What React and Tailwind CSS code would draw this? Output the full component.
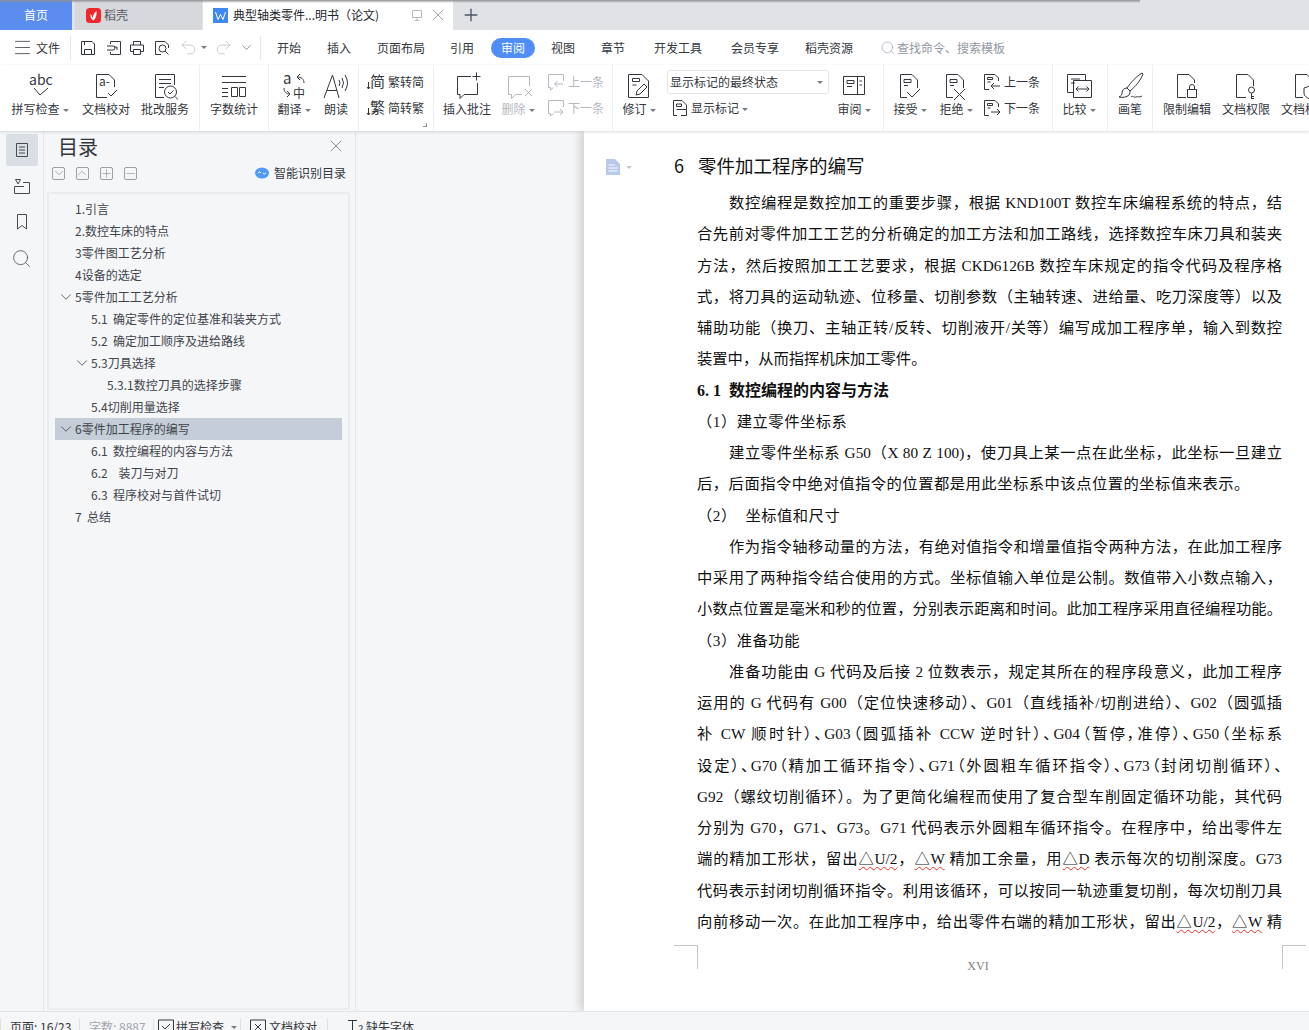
import React from 'react';
import { ChevronDown, X, Plus, Search, Menu, Undo2, Redo2, Minus } from 'lucide-react';

const Ico = ({ w = 30, h = 30, className = '', children }) => (
  <svg width={w} height={h} viewBox={`0 0 ${w} ${h}`} fill="none" stroke="currentColor" strokeWidth="1" className={`shrink-0 overflow-visible ${className}`}>
    {children}
  </svg>
);

const GlyphText = ({ x, y, size, children }) => (
  <text x={x} y={y} fontSize={size} fill="currentColor" stroke="none" fontFamily="Noto Sans CJK SC, sans-serif">{children}</text>
);

const Caret = ({ className = '' }) => (
  <span className={`ml-[3px] inline-block h-0 w-0 border-x-[3px] border-t-[3px] border-x-transparent border-t-[#777c85] align-middle ${className}`} />
);

const Sep = () => <div className="h-full w-px shrink-0 bg-[#eceef0]" />;

// ribbon button: icon on top, label below
const Big = ({ width, icon, label, caret, grey }) => (
  <div className={`flex shrink-0 flex-col items-center ${width} ${grey ? 'text-[#b4b8be]' : 'text-[#33373d]'}`}>
    <div className="mt-[6px] flex h-[30px] items-center justify-center">{icon}</div>
    <div className="-mt-[1px] whitespace-nowrap text-xs leading-[18px]">{label}{caret && <Caret />}</div>
  </div>
);

const Small = ({ icon, label, caret, grey }) => (
  <div className={`flex h-[18px] items-center gap-[3px] whitespace-nowrap text-xs ${grey ? 'text-[#b4b8be]' : 'text-[#33373d]'}`}>
    {icon}<span>{label}{caret && <Caret />}</span>
  </div>
);

const DocTag = ({ children }) => (
  <Ico className="-ml-[6px]">
    <path d="M8.5 3.5H20L25.5 9V17M8.5 3.5V26.5H15" />
    <path d="M12 8.5h7v3h-7zM12 14.5h4" />
    {children}
  </Ico>
);

const SmallDoc = ({ dir }) => (
  <Ico w={18} h={18}>
    <path d="M1.5 1.5H12L15.5 5V8M1.5 1.5V16.5H6" />
    <path d="M4.5 4.5h5v2h-5zM4.5 9h3" />
    {dir === 'up' ? <path d="M17 13H8M11 10l-3 3 3 3" /> : <path d="M8 13h9M14 10l3 3-3 3" />}
  </Ico>
);

const SmallBubble = ({ dir }) => (
  <Ico w={18} h={18}>
    <path d="M1.5 1.5H16.5V8M1.5 1.5V14.5H3.5V17L6.5 14.5" />
    {dir === 'up' ? <path d="M16 11H7.5M10.5 8l-3 3 3 3" /> : <path d="M7 13h9M13 10l3 3-3 3" />}
  </Ico>
);

const SquareBtn = ({ children, className = '' }) => (
  <div className={`flex h-[13px] w-[13px] shrink-0 items-center justify-center overflow-hidden rounded-[2px] border border-[#9a9ea5] ${className}`}>
    {children}
  </div>
);

const MENU = [
  ['开始', 'w-[56px]'],
  ['插入', 'w-[44px]'],
  ['页面布局', 'w-[80px]'],
  ['引用', 'w-[42px]'],
  ['审阅', 'ml-[8px] w-[44px] rounded-full bg-[#4f8ef7] text-white'],
  ['视图', 'w-[56px]'],
  ['章节', 'w-[44px]'],
  ['开发工具', 'w-[86px]'],
  ['会员专享', 'w-[68px]'],
  ['稻壳资源', 'w-[80px]'],
];

const TOC = [
  { t: '1.引言', cls: 'pl-[20px]' },
  { t: '2.数控车床的特点', cls: 'pl-[20px]' },
  { t: '3零件图工艺分析', cls: 'pl-[20px]' },
  { t: '4设备的选定', cls: 'pl-[20px]' },
  { t: '5零件加工工艺分析', cls: 'pl-[2px]', open: true },
  { t: '5.1  确定零件的定位基准和装夹方式', cls: 'pl-[36px]' },
  { t: '5.2  确定加工顺序及进给路线', cls: 'pl-[36px]' },
  { t: '5.3刀具选择', cls: 'pl-[18px]', open: true },
  { t: '5.3.1数控刀具的选择步骤', cls: 'pl-[52px]' },
  { t: '5.4切削用量选择', cls: 'pl-[36px]' },
  { t: '6零件加工程序的编写', cls: 'pl-[2px] bg-[#c5ced8]', open: true },
  { t: '6.1  数控编程的内容与方法', cls: 'pl-[36px]' },
  { t: '6.2    装刀与对刀', cls: 'pl-[36px]' },
  { t: '6.3  程序校对与首件试切', cls: 'pl-[36px]' },
  { t: '7  总结', cls: 'pl-[20px]' },
];

const Wavy = ({ children }) => (
  <span className="underline decoration-[#e5342c] decoration-wavy decoration-1 underline-offset-2">{children}</span>
);

const Line = ({ children, indent, last, tight, wide }) => (
  <div className={`whitespace-pre ${indent ? 'pl-[32px]' : ''} ${last ? '' : 'text-justify [text-align-last:justify]'} ${tight ? "[font-feature-settings:'palt']" : ''} ${wide ? 'tracking-[0.5px]' : ''}`}>
    {children}
  </div>
);

export default function App() {
  return (
    <div lang="zh-CN" className="relative flex h-[1030px] w-full flex-col overflow-hidden bg-[#f5f6f8] text-[#33373d] [font-family:'Noto_Sans_CJK_SC',sans-serif]">
      {/* window shadow over the tabs */}
      <div className="pointer-events-none absolute left-0 top-0 h-[3px] w-[1140px] bg-gradient-to-b from-[#8f9094] to-transparent" />

      {/* Tab bar */}
      <div className="flex h-[30px] shrink-0 items-center bg-[#e0e2e6] text-xs">
        <div className="flex h-full w-[72px] items-center justify-center bg-[#5b8def] text-white">首页</div>
        <div className="ml-[3px] flex h-full w-[127px] items-center bg-[#d7d8dc] pl-[11px] text-[#55595f]">
          <svg width="15" height="15" viewBox="0 0 15 15">
            <rect width="15" height="15" rx="3.5" fill="#f0282d" />
            <path d="M7.5 12.5C5 11 4 9 4.5 6c1 1 1.5 2.5 2 4 .5-2.5 1.500-5 4-7 .5 3-.5 7-3 9.500z" fill="#fff" />
          </svg>
          <span className="ml-[3px]">稻壳</span>
        </div>
        <div className="ml-px flex h-full w-[250px] items-center bg-white pl-[10px] text-[#22262b]">
          <svg width="15" height="15" viewBox="0 0 15 15" className="shrink-0">
            <rect width="15" height="15" fill="#3f87f5" />
            <path d="M2.500 4l2.500 7.500 2.500-5 2.500 5L12.500 4" fill="none" stroke="#fff" strokeWidth="1" />
          </svg>
          <span className="ml-[5px] w-[178px] shrink-0 whitespace-nowrap">典型轴类零件...明书（论文)</span>
          <Ico w={12} h={12} className="text-[#b4b8be]">
            <path d="M1.500 1.500h9v7h-9zM6 8.500v2.500M3.500 11.500h5" />
          </Ico>
          <X size={20} strokeWidth={0.9} className="ml-[5px] shrink-0 text-[#80848b]" />
        </div>
        <Plus size={20} strokeWidth={1.6} className="ml-[8px] text-[#4b5563]" />
      </div>

      {/* Menu row */}
      <div className="flex h-[35px] shrink-0 items-center bg-white text-xs">
        <Menu size={21} strokeWidth={0.9} className="ml-[12px] shrink-0" />
        <span className="ml-[3px] w-[34px]">文件</span>
        <div className="h-[24px] w-px bg-[#e4e6e9]" />
        <div className="flex w-[189px] items-center pl-[9px]">
          <Ico w={16} h={16}><path d="M1.500 1.500H12L14.500 4V14.500H1.500zM4.500 14.500V9.500H11.500V14.500M4.500 1.500V5" /></Ico>
          <Ico w={16} h={16} className="ml-[10px]"><path d="M4.500 4V1.500H14.500V14.500H4.500V12M1 6h6a2 2 0 0 1 0 4H1M8 7h3v3" /></Ico>
          <Ico w={16} h={16} className="ml-[7px]"><path d="M4.500 5V1.500H11.500V5M4.500 11.500H1.500V5H14.500V11.500H11.500M4.500 9.500H11.500V14.500H4.500z" /></Ico>
          <Ico w={16} h={16} className="ml-[9px]"><path d="M1.500 14.500V1.500H11L14.500 5V8M1.500 14.500H7" /><circle cx="8.500" cy="8.500" r="3.500" /><path d="M11 11l3.500 3.500" /></Ico>
          <Undo2 size={19} strokeWidth={0.9} className="ml-[9px] shrink-0 text-[#b4b8be]" />
          <Caret className="ml-[3px]" />
          <Redo2 size={19} strokeWidth={0.9} className="ml-[7px] shrink-0 text-[#b4b8be]" />
          <ChevronDown size={15} strokeWidth={1} className="ml-[6px] shrink-0 text-[#555]" />
        </div>
        <div className="h-[24px] w-px bg-[#e4e6e9]" />
        {MENU.map(([name, cls]) => (
          <div key={name} className={`flex h-[20px] shrink-0 items-center justify-center ${cls}`}>{name}</div>
        ))}
        <Search size={16} strokeWidth={1} className="ml-[11px] shrink-0 text-[#9aa3b2]" />
        <span className="ml-[1px] text-[#9298a3]">查找命令、搜索模板</span>
      </div>

      {/* Ribbon */}
      <div className="z-10 flex h-[66px] shrink-0 overflow-hidden bg-white pl-[5px] shadow-[0_1px_3px_rgba(0,0,0,0.14)]">
        <Big width="w-[70px]" caret label="拼写检查" icon={
          <Ico>
            <GlyphText x={4} y={14} size={14}>abc</GlyphText>
            <path d="M9 17l6 7 8-7" />
          </Ico>
        } />
        <div className="w-px shrink-0" />
        <Big width="w-[60px]" label="文档校对" icon={
          <Ico>
            <GlyphText x={8} y={15} size={12}>a-</GlyphText>
            <path d="M5.500 3.500H18L23.500 9V16M5.500 3.500V26.500H16M17 22l3 3 6-6" />
          </Ico>
        } />
        <Big width="w-[58px]" label="批改服务" icon={
          <Ico>
            <path d="M5.500 3.500H24.500V14M5.500 3.500V26.500H14M9 8.500H21M9 12.500H21M9 16.500H14" />
            <circle cx="20.500" cy="21" r="6" />
            <path d="M25 25.500l3 3M18 21l2 2 3.500-3.500" />
          </Ico>
        } />
        <div className="w-[5px] shrink-0" />
        <Sep />
        <Big width="w-[68px]" label="字数统计" icon={
          <Ico>
            <path d="M3 5.500H27M3 11.500H27M3 17.500H9M3 21.500H9M3 25.500H9" />
            <path d="M12.500 16.500h6v9h-6zM20.500 16.500h6v9h-6z" />
          </Ico>
        } />
        <Sep />
        <Big width="w-[50px]" caret label="翻译" icon={
          <Ico>
            <GlyphText x={4} y={13} size={15}>a</GlyphText>
            <GlyphText x={14} y={27} size={12}>中</GlyphText>
            <path d="M25 12c0-4-3-6-7-6l3-3M18 6l3 3M5 17c0 4 2 6 6 6l-3-3M11 23l-3 3" />
          </Ico>
        } />
        <Big width="w-[34px]" label="朗读" icon={
          <Ico>
            <path d="M3 27L11.500 4 18 27M6 19.500H16" />
            <path d="M18 9q2 3 0 6M21 7q3 5 0 10M24 4q5 8 0 16" />
          </Ico>
        } />
        <div className="w-[5px] shrink-0" />
        <Sep />
        <div className="relative flex w-[74px] shrink-0 flex-col gap-[8px] pl-[8px] pt-[8px]">
          <Small label="繁转简" icon={
            <Ico w={18} h={18}><GlyphText x={3} y={14} size={15}>简</GlyphText><path d="M1.500 9v7M0 14l1.500 2L3 14" /></Ico>
          } />
          <Small label="简转繁" icon={
            <Ico w={18} h={18}><GlyphText x={3} y={14} size={15}>繁</GlyphText><path d="M1.500 9v7M0 14l1.500 2L3 14" /></Ico>
          } />
          <div className="absolute bottom-[4px] right-[6px] h-[4px] w-[4px] border-b border-r border-[#8b8f96]" />
        </div>
        <Sep />
        <Big width="w-[66px]" label="插入批注" icon={
          <Ico>
            <path d="M5.500 5.500H19M25.500 12V23.500H12L8 27.500V23.500H5.500V5.500" />
            <path d="M24.500 1.500V9.500M20.500 5.500H28.500" />
          </Ico>
        } />
        <Big width="w-[36px]" grey caret label="删除" icon={
          <Ico>
            <path d="M5.500 5.500H26.500V15M5.500 5.500V23.500H8.500V27.500L12.500 23.500H19" />
            <path d="M22 18l7 7M29 18l-7 7" />
          </Ico>
        } />
        <div className="flex w-[76px] shrink-0 flex-col gap-[8px] pl-[11px] pt-[8px]">
          <Small grey label="上一条" icon={<SmallBubble dir="up" />} />
          <Small grey label="下一条" icon={<SmallBubble dir="down" />} />
        </div>
        <Sep />
        <Big width="w-[52px]" caret label="修订" icon={
          <Ico>
            <path d="M4.500 3.500H18L24.500 10V26.500H4.500z" />
            <path d="M8.500 7.500h7v3h-7zM8.500 14h4M12 24l1-4 7-7 3 3-7 7z" />
          </Ico>
        } />
        <div className="flex w-[167px] shrink-0 flex-col pl-[2px] pt-[5px]">
          <div className="flex h-[24px] w-[162px] items-center justify-between rounded-[3px] border border-[#e3e5e8] pl-[2px] pr-[5px] text-xs">
            <span>显示标记的最终状态</span><Caret />
          </div>
          <div className="mt-[5px] pl-[5px]">
            <Small caret label="显示标记" icon={
              <Ico w={16} h={18}>
                <path d="M1.500 1.500H10L14.500 6V10M1.500 1.500V16.500H5M4.500 5h5v2.500h-5zM4.500 10.500h3.500M7.500 10.500H14.500V16.500H9" />
              </Ico>
            } />
          </div>
        </div>
        <Big width="w-[44px]" caret label="审阅" icon={
          <Ico>
            <path d="M4.500 5.500H25.500V23.500H4.500zM18.500 5.500V23.500M8 9.500h7v3H8zM8 15.500h5M20.500 10H23M20.500 14H23" />
          </Ico>
        } />
        <div className="w-[7px] shrink-0" />
        <Sep />
        <Big width="w-[52px]" caret label="接受" icon={<DocTag><path d="M15 21l5 5 8-8" /></DocTag>} />
        <Big width="w-[40px]" caret label="拒绝" icon={<DocTag><path d="M16 18l11 11M27 18L16 29" /></DocTag>} />
        <div className="flex w-[76px] shrink-0 flex-col gap-[8px] pl-[7px] pt-[8px]">
          <Small label="上一条" icon={<SmallDoc dir="up" />} />
          <Small label="下一条" icon={<SmallDoc dir="down" />} />
        </div>
        <Sep />
        <Big width="w-[52px]" caret label="比较" icon={
          <Ico>
            <path d="M3.500 3.500H21.500V9M3.500 3.500V21.500H9M9.500 9.500H27.500V26.500H9.500zM7 8h9M7 12h4" />
            <path d="M12 18h13M14.500 15.500L12 18l2.500 2.500M22.500 15.500L25 18l-2.500 2.500" />
          </Ico>
        } />
        <div className="w-[2px] shrink-0" />
        <Sep />
        <Big width="w-[44px]" label="画笔" icon={
          <Ico>
            <path d="M27 2c-5 3-11 9-15 15l3 3c5-4 11-11 13-17zM12 17c-3 0-5 2-5 5 0 2-1 3-3 4 4 1 8 0 10-2 1-1 1-3 1-4" />
            <path d="M16 26c2-2 3 1 5 0s3 1 6-1" />
          </Ico>
        } />
        <Sep />
        <Big width="w-[68px]" label="限制编辑" icon={
          <Ico>
            <path d="M5.500 3.500H17L22.500 9V12M5.500 3.500V26.500H14" />
            <path d="M15.500 18.500h9v8h-9zM17.500 18.500v-2.500a2.500 2.500 0 0 1 5 0v2.500" />
          </Ico>
        } />
        <Big width="w-[50px]" label="文档权限" icon={
          <Ico>
            <path d="M5.500 3.500H17L22.500 9V15M5.500 3.500V26.500H15" />
            <circle cx="20.500" cy="19" r="3" />
            <path d="M20.500 22V28M20.500 25.500H23M20.500 27.500H23" />
          </Ico>
        } />
        <Big width="w-[68px]" label="文档校对" icon={
          <Ico>
            <path d="M5.500 3.500H17L22.500 9V14M5.500 3.500V26.500H13" />
            <path d="M20 15l6 2v5c0 3-3 5-6 6-3-1-6-3-6-6v-5z" />
          </Ico>
        } />
      </div>

      {/* Main */}
      <div className="flex h-[880px] shrink-0">
        {/* Left rail */}
        <div className="flex w-[44px] shrink-0 flex-col items-center border-r border-[#e4e6ea] pt-[3px] text-[#444a53]">
          <div className="flex h-[32px] w-[32px] items-center justify-center rounded-[2px] bg-[#dadee5]">
            <Ico w={16} h={16}><path d="M2.500 1.500H13.500V14.500H2.500zM5 5h6M5 8h6M5 11h6" /></Ico>
          </div>
          <div className="mt-[4px] flex h-[32px] items-center">
            <Ico w={18} h={18}><path d="M2.500 2.500h5L5 7zM1.500 9.500V16.500H16.500V5.500H10M1.500 9.500H11" /></Ico>
          </div>
          <div className="mt-[4px] flex h-[32px] items-center">
            <Ico w={14} h={18}><path d="M2.500 1.500H11.500V16L7 12.500 2.500 16z" /></Ico>
          </div>
          <div className="mt-[4px] flex h-[32px] items-center">
            <Search size={21} strokeWidth={0.9} />
          </div>
        </div>

        {/* Contents panel */}
        <div className="flex w-[312px] shrink-0 flex-col border-r border-[#e4e6ea] pb-px pl-[3px] pr-[5px]">
          <div className="relative h-[61px]">
            <div className="pl-[11px] pt-[3px] text-[20px] leading-[26px] text-[#33373d]">目录</div>
            <X size={20} strokeWidth={0.9} className="absolute right-[4px] top-[5px] text-[#666b73]" />
            <div className="mt-[5px] flex items-center pl-[5px] text-[#777b83]">
              <SquareBtn><ChevronDown size={14} strokeWidth={1} className="shrink-0" /></SquareBtn>
              <SquareBtn className="ml-[11px] rotate-180"><ChevronDown size={14} strokeWidth={1} className="shrink-0" /></SquareBtn>
              <SquareBtn className="ml-[11px]"><Plus size={13} strokeWidth={1} className="shrink-0" /></SquareBtn>
              <SquareBtn className="ml-[11px]"><Minus size={13} strokeWidth={1} className="shrink-0" /></SquareBtn>
              <svg width="14" height="12" viewBox="0 0 14 12" className="ml-[118px] shrink-0">
                <ellipse cx="7" cy="6" rx="7" ry="5.500" fill="#4f9bf7" />
                <path d="M3 6l1.500-1L6 6M8 6l1.500 1L11 6" fill="none" stroke="#fff" strokeWidth="1" />
              </svg>
              <span className="ml-[5px] whitespace-nowrap text-xs text-[#33373d]">智能识别目录</span>
            </div>
          </div>
          <div className="flex-1 rounded-[3px] border-2 border-[#eaecf0] py-[4px] pl-[6px] pr-[6px] text-xs text-[#3f444b]">
            {TOC.map((row) => (
              <div key={row.t} className={`flex h-[22px] items-center whitespace-pre ${row.cls}`}>
                {row.open && <ChevronDown size={18} strokeWidth={1} className="shrink-0 text-[#333]" />}
                <span>{row.t}</span>
              </div>
            ))}
          </div>
        </div>

        {/* Gap beside the page */}
        <div className="w-[228px] shrink-0" />

        {/* Page */}
        <div className="z-0 flex min-w-0 flex-1 flex-col bg-white pl-[22px] pr-[3px] text-[#111] shadow-[-4px_0_9px_rgba(0,0,0,0.16)] [font-family:'Liberation_Serif','Noto_Sans_CJK_SC',serif]">
          <div className="flex h-[56px] items-end pb-[9px]">
            <div className="flex w-[68px] items-center pb-[3px] text-[#b9c7e0]">
              <svg width="14" height="16" viewBox="0 0 14 16">
                <path d="M0 0h9l5 5v11H0z" fill="#b9c9e8" />
                <path d="M2.500 6h6M2.500 9h9M2.500 12h9" stroke="#fff" strokeWidth="1" />
              </svg>
              <Caret className="ml-[6px] border-t-[#c4c7cc]" />
            </div>
            <span className="w-[24px] text-[18px] leading-[26px] [font-family:'Noto_Sans_CJK_SC',sans-serif]">6</span>
            <span className="text-[18.500px] leading-[26px] [font-family:'Noto_Sans_CJK_SC',sans-serif]">零件加工程序的编写</span>
          </div>
          <div className="ml-[91px] mr-[24px] text-[15.300px] leading-[31.250px]">
            <Line indent>数控编程是数控加工的重要步骤，根据 KND100T 数控车床编程系统的特点，结</Line>
            <Line>合先前对零件加工工艺的分析确定的加工方法和加工路线，选择数控车床刀具和装夹</Line>
            <Line>方法，然后按照加工工艺要求，根据 CKD6126B 数控车床规定的指令代码及程序格</Line>
            <Line>式，将刀具的运动轨迹、位移量、切削参数（主轴转速、进给量、吃刀深度等）以及</Line>
            <Line>辅助功能（换刀、主轴正转/反转、切削液开/关等）编写成加工程序单，输入到数控</Line>
            <Line last>装置中，从而指挥机床加工零件。</Line>
            <Line last><b className="text-[16px]">6. 1  数控编程的内容与方法</b></Line>
            <Line last wide>（1）建立零件坐标系</Line>
            <Line indent>建立零件坐标系 G50（X 80 Z 100)，使刀具上某一点在此坐标，此坐标一旦建立</Line>
            <Line last wide>后，后面指令中绝对值指令的位置都是用此坐标系中该点位置的坐标值来表示。</Line>
            <Line last wide>（2）  坐标值和尺寸</Line>
            <Line indent>作为指令轴移动量的方法，有绝对值指令和增量值指令两种方法，在此加工程序</Line>
            <Line>中采用了两种指令结合使用的方式。坐标值输入单位是公制。数值带入小数点输入，</Line>
            <Line>小数点位置是毫米和秒的位置，分别表示距离和时间。此加工程序采用直径编程功能。</Line>
            <Line last wide>（3）准备功能</Line>
            <Line indent>准备功能由 G 代码及后接 2 位数表示，规定其所在的程序段意义，此加工程序</Line>
            <Line>运用的 G 代码有 G00（定位快速移动）、G01（直线插补/切削进给）、G02（圆弧插</Line>
            <Line tight>补 CW 顺时针）、G03（圆弧插补 CCW 逆时针）、G04（暂停，准停）、G50（坐标系</Line>
            <Line tight>设定）、G70（精加工循环指令）、G71（外圆粗车循环指令）、G73（封闭切削循环）、</Line>
            <Line>G92（螺纹切削循环）。为了更简化编程而使用了复合型车削固定循环功能，其代码</Line>
            <Line>分别为 G70，G71、G73。G71 代码表示外圆粗车循环指令。在程序中，给出零件左</Line>
            <Line>端的精加工形状，留出<Wavy>△U/2</Wavy>，<Wavy>△W</Wavy> 精加工余量，用<Wavy>△D</Wavy> 表示每次的切削深度。G73</Line>
            <Line>代码表示封闭切削循环指令。利用该循环，可以按同一轨迹重复切削，每次切削刀具</Line>
            <Line>向前移动一次。在此加工程序中，给出零件右端的精加工形状，留出<Wavy>△U/2</Wavy>，<Wavy>△W</Wavy> 精</Line>
          </div>
          <div className="ml-[68px] mt-[8px] flex items-start justify-between">
            <div className="h-[24px] w-[24px] border-r border-t border-[#c4c4c4]" />
            <span className="mr-[24px] mt-[13px] text-xs text-[#808080]">XVI</span>
            <div className="h-[24px] w-[24px] border-l border-t border-[#c4c4c4]" />
          </div>
        </div>
      </div>

      {/* Status bar */}
      <div className="z-10 flex h-[30px] shrink-0 items-start border-t border-[#e2e4e8] bg-[#f5f6f8] pt-[7px] text-xs leading-[16px] text-[#33373d]">
        <div className="h-[16px] w-px bg-[#dfe1e5]" />
        <span className="ml-[9px] w-[69px]">页面: 16/23</span>
        <div className="h-[16px] w-px bg-[#dfe1e5]" />
        <span className="ml-[9px] w-[64px] text-[#a3a7ad]">字数: 8887</span>
        <div className="h-[16px] w-px bg-[#dfe1e5]" />
        <Ico w={16} h={16} className="ml-[4px]"><path d="M.5 15.500V1H15.500V15.500zM4 7l3 3 5-5" /></Ico>
        <span className="ml-[2px]">拼写检查</span>
        <Caret className="ml-[7px] mt-[7px]" />
        <div className="ml-[3px] h-[16px] w-px bg-[#dfe1e5]" />
        <Ico w={16} h={16} className="ml-[9px]"><path d="M.5 15.500V1H15.500V15.500zM5 5l6 6M11 5l-6 6" /></Ico>
        <span className="ml-[3px]">文档校对</span>
        <div className="ml-[10px] h-[16px] w-px bg-[#dfe1e5]" />
        <Ico w={18} h={16} className="ml-[19px]"><path d="M1 1.500H10M5.500 1.500V15.500" /><GlyphText x={11} y={15} size={11}>?</GlyphText></Ico>
        <span className="ml-[1px]">缺失字体</span>
      </div>
    </div>
  );
}
